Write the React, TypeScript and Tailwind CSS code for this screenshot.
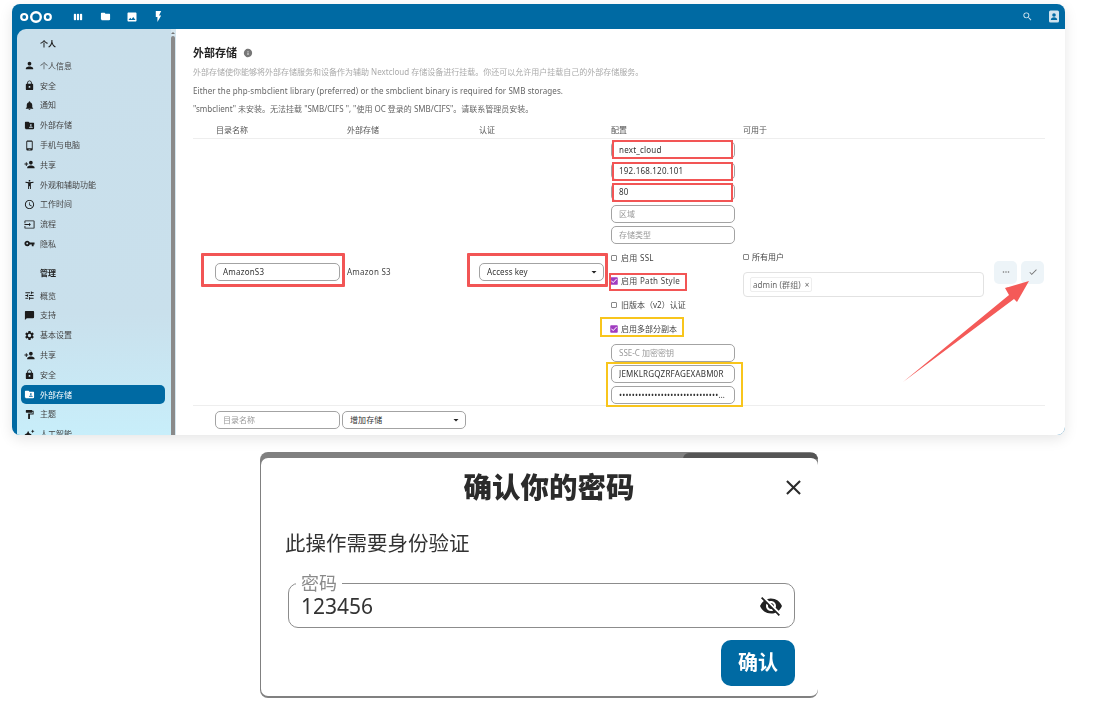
import React from "react";
import {
  MdPerson, MdLock, MdNotifications, MdFolderShared, MdOutlinePhoneAndroid, MdPersonAdd,
  MdAccessibilityNew, MdOutlineAccessTime, MdVpnKey, MdTune, MdChatBubble, MdSettings,
  MdFormatPaint, MdAutoAwesome, MdFolder, MdImage, MdFlashOn, MdSearch, MdViewWeek, MdInfo,
  MdArrowDropDown, MdCheck, MdMoreHoriz, MdClose, MdVisibilityOff, MdInput, MdCheckBox,
} from "react-icons/md";

type Item = { label: string; icon: React.ComponentType<{ className?: string }>; active?: boolean };

const personal: Item[] = [
  { label: "个人信息", icon: MdPerson },
  { label: "安全", icon: MdLock },
  { label: "通知", icon: MdNotifications },
  { label: "外部存储", icon: MdFolderShared },
  { label: "手机与电脑", icon: MdOutlinePhoneAndroid },
  { label: "共享", icon: MdPersonAdd },
  { label: "外观和辅助功能", icon: MdAccessibilityNew },
  { label: "工作时间", icon: MdOutlineAccessTime },
  { label: "流程", icon: MdInput },
  { label: "隐私", icon: MdVpnKey },
];

const admin: Item[] = [
  { label: "概览", icon: MdTune },
  { label: "支持", icon: MdChatBubble },
  { label: "基本设置", icon: MdSettings },
  { label: "共享", icon: MdPersonAdd },
  { label: "安全", icon: MdLock },
  { label: "外部存储", icon: MdFolderShared, active: true },
  { label: "主题", icon: MdFormatPaint },
  { label: "人工智能", icon: MdAutoAwesome },
];

function NavItem({ item }: { item: Item }) {
  const Icon = item.icon;
  return (
    <div className={"mx-[4px] my-[0.6px] flex h-[18.6px] w-[144px] shrink-0 items-center gap-[5px] rounded-[5px] pl-[3px] text-[8px] " + (item.active ? "bg-[#006aa3] text-white" : "text-[#444]")}>
      <Icon className={"h-[11px] w-[11px] shrink-0 " + (item.active ? "text-white" : "text-[#1c1c1c]")} />
      <span>{item.label}</span>
    </div>
  );
}

function Field({ value, placeholder, w = "w-[124px]" }: { value?: string; placeholder?: string; w?: string }) {
  return (
    <div className={"flex h-[18px] shrink-0 items-center overflow-hidden rounded-[5px] border border-[#a3a3a3] bg-white px-[7px] text-[8px] " + w + (value ? " tracking-[0.2px] text-[#333]" : " text-[#999]")}>
      <span className="truncate">{value ?? placeholder}</span>
    </div>
  );
}

function ConfigInput(props: { value?: string; placeholder?: string }) {
  return (
    <div className="flex h-[21.4px] shrink-0 items-center">
      <Field {...props} />
    </div>
  );
}

function Check({ label, checked, latin }: { label: string; checked?: boolean; latin?: boolean }) {
  return (
    <div className={"flex h-[23.6px] shrink-0 items-center gap-[4px] text-[8px] text-[#444] " + (latin ? "tracking-[0.3px]" : "")}>
      {checked ? (
        <MdCheckBox className="ml-[-1px] mr-[-1px] h-[8px] w-[8px] scale-125 text-[#a03cc0]" />
      ) : (
        <span className="h-[6px] w-[6px] rounded-[1px] border border-[#888] bg-white" />
      )}
      <span>{label}</span>
    </div>
  );
}

function Select({ label, w = "w-[125px]" }: { label: string; w?: string }) {
  return (
    <div className={"flex h-[18px] items-center justify-between rounded-[5px] border border-[#a3a3a3] bg-white pl-[7px] pr-[3px] text-[8px] tracking-[0.1px] text-[#333] " + w}>
      <span>{label}</span>
      <MdArrowDropDown className="h-[12px] w-[12px] text-[#222]" />
    </div>
  );
}

function Logo() {
  return (
    <svg viewBox="0 0 32 12" className="h-[12px] w-[32px]" fill="none" stroke="white">
      <circle cx="4.2" cy="6" r="3" strokeWidth="2.2" />
      <circle cx="16" cy="6" r="4.8" strokeWidth="2.4" />
      <circle cx="27.8" cy="6" r="3" strokeWidth="2.2" />
    </svg>
  );
}

function ContactIcon() {
  return (
    <svg viewBox="0 0 12 13" className="h-[13px] w-[12px]">
      <rect x="1" y="0.5" width="10" height="12" rx="1.5" fill="#cfe3ee" />
      <circle cx="6" cy="5" r="1.8" fill="#006aa3" />
      <path d="M2.8 10c0-2 1.4-2.8 3.2-2.8S9.2 8 9.2 10z" fill="#006aa3" />
    </svg>
  );
}

function Box({ className }: { className: string }) {
  return <div className={"pointer-events-none absolute " + className} />;
}

export default function App() {
  return (
    <div className="min-h-[702px] bg-white font-['Noto_Sans','Noto_Sans_CJK_SC',sans-serif]">
      <div className="pl-[12px] pt-[4px]">
        <div className="relative flex h-[431px] w-[1053px] flex-col overflow-hidden rounded-[8px] bg-[#006aa3] shadow-[0_4px_14px_rgba(0,0,0,0.1)] blur-[0.4px]">
          <header className="flex h-[25px] shrink-0 items-center text-white">
            <div className="ml-[8px] flex w-[32px]"><Logo /></div>
            <MdViewWeek className="ml-[21px] h-[10px] w-[10px]" />
            <MdFolder className="ml-[17px] h-[11px] w-[11px]" />
            <MdImage className="ml-[15px] h-[12px] w-[12px]" />
            <MdFlashOn className="ml-[14px] h-[13px] w-[13px]" />
            <MdSearch className="ml-auto h-[11px] w-[11px] text-[#d7e8f1]" />
            <div className="ml-[15px] mr-[5px]"><ContactIcon /></div>
          </header>

          <div className="flex min-h-0 flex-1 pl-[5px]">
            <nav className="flex w-[154px] shrink-0 flex-col overflow-hidden rounded-tl-[9px] bg-gradient-to-b from-[#c9dfeb] via-[#c9e0ec] via-70% to-[#c8eefa] pt-[5px]">
              <div className="ml-[23px] flex h-[20px] shrink-0 items-center text-[8px] font-bold text-[#222]">个人</div>
              <div className="mt-[2px] flex flex-col">
                {personal.map((i) => <NavItem key={i.label} item={i} />)}
              </div>
              <div className="ml-[23px] mt-[9px] flex h-[20px] shrink-0 items-center text-[8px] font-bold text-[#222]">管理</div>
              <div className="mt-[3px] flex flex-col">
                {admin.map((i, n) => <NavItem key={n} item={i} />)}
              </div>
            </nav>

            <div className="flex w-[5px] shrink-0 flex-col items-center bg-[#d5e6ef] pr-px">
              <div className="mt-[3px] h-0 w-0 border-x-[2px] border-b-[2.5px] border-x-transparent border-b-[#777]" />
              <div className="mt-[2px] w-[4px] flex-1 rounded-t-[2px] bg-[#8a8a8a]" />
            </div>

            <main className="flex min-w-0 flex-1 flex-col overflow-hidden bg-white pl-[17px] pt-[16px]">
              <div className="flex h-[16px] shrink-0 items-center gap-[6px] text-[11px] font-bold text-[#222]">
                <span>外部存储</span>
                <MdInfo className="h-[10px] w-[10px] text-[#777]" />
              </div>
              <p className="mt-[2px] flex h-[18px] shrink-0 items-center text-[8px] text-[#aaa]">外部存储使你能够将外部存储服务和设备作为辅助 Nextcloud 存储设备进行挂载。你还可以允许用户挂载自己的外部存储服务。</p>
              <p className="flex h-[19px] shrink-0 items-center text-[8px] tracking-[0.09px] text-[#666]">Either the php-smbclient library (preferred) or the smbclient binary is required for SMB storages.</p>
              <p className="flex h-[18px] shrink-0 items-center text-[8px] text-[#666]">"smbclient" 未安装。无法挂载 "SMB/CIFS ", "使用 OC 登录的 SMB/CIFS"。请联系管理员安装。</p>

              <div className="mt-[3px] w-[852px]">
                <div className="grid h-[18px] grid-cols-[154px_132px_132px_132px_1fr] items-center border-b border-[#eee] text-[8px] text-[#555]">
                  <span className="pl-[23px]">目录名称</span>
                  <span>外部存储</span>
                  <span>认证</span>
                  <span>配置</span>
                  <span>可用于</span>
                </div>

                <div className="flex h-[267px] items-center border-b border-[#eee]">
                  <div className="w-[154px] shrink-0 pl-[22px]"><Field value="AmazonS3" w="w-[125px]" /></div>
                  <div className="w-[132px] shrink-0 text-[8px] tracking-[0.25px] text-[#444]">Amazon S3</div>
                  <div className="w-[132px] shrink-0"><Select label="Access key" /></div>
                  <div className="flex h-full w-[132px] shrink-0 flex-col">
                    <ConfigInput value="next_cloud" />
                    <ConfigInput value="192.168.120.101" />
                    <ConfigInput value="80" />
                    <ConfigInput placeholder="区域" />
                    <ConfigInput placeholder="存储类型" />
                    <Check label="启用 SSL" latin />
                    <Check label="启用 Path Style" checked latin />
                    <Check label="旧版本（v2）认证" />
                    <Check label="启用多部分副本" checked />
                    <div className="mt-[1.5px]" />
                    <ConfigInput placeholder="SSE-C 加密密钥" />
                    <ConfigInput value="JEMKLRGQZRFAGEXABM0R" />
                    <ConfigInput value="••••••••••••••••••••••••••••••••••••••••••••••" />
                  </div>
                  <div className="mt-[2.5px] w-[241px] shrink-0">
                    <div className="flex h-[15px] items-center gap-[3px] text-[8px] text-[#444]">
                      <span className="h-[6px] w-[6px] rounded-[1px] border border-[#888]" />
                      <span>所有用户</span>
                    </div>
                    <div className="mt-[7.5px] flex h-[25px] items-center rounded-[4px] border border-[#e2e2e2] pl-[6px]">
                      <span className="flex h-[15px] items-center gap-[4px] rounded-[2px] border border-[#eee] px-[2px] text-[8px] tracking-[0.1px] text-[#666]">
                        admin (群组) <span className="text-[8px]">×</span>
                      </span>
                    </div>
                  </div>
                  <div className="ml-[10px] flex gap-[4px]">
                    <div className="flex h-[23px] w-[23px] items-center justify-center rounded-[5px] bg-[#edf4f8] text-[#777]"><MdMoreHoriz className="h-[10px] w-[10px]" /></div>
                    <div className="flex h-[23px] w-[23px] items-center justify-center rounded-[5px] bg-[#edf4f8] text-[#777]"><MdCheck className="h-[10px] w-[10px]" /></div>
                  </div>
                </div>

                <div className="flex h-[27px] items-center">
                  <div className="w-[149px] shrink-0 pl-[22px]"><Field placeholder="目录名称" w="w-[125px]" /></div>
                  <Select label="增加存储" w="w-[124px]" />
                </div>
              </div>
            </main>
          </div>

          <Box className="left-[189px] top-[249px] h-[34px] w-[144px] rounded-[1px] border-[3px] border-[#f25555]" />
          <Box className="left-[455px] top-[249px] h-[34px] w-[141px] rounded-[1px] border-[3px] border-[#f25555]" />
          <Box className="left-[600px] top-[136px] h-[19px] w-[121px] border-2 border-[#f25555]" />
          <Box className="left-[600px] top-[158px] h-[19px] w-[121px] border-2 border-[#f25555]" />
          <Box className="left-[600px] top-[179px] h-[19px] w-[121px] border-2 border-[#f25555]" />
          <Box className="left-[597px] top-[269px] h-[18px] w-[78px] border-2 border-[#f25555]" />
          <Box className="left-[588px] top-[313px] h-[20px] w-[84px] border-2 border-[#f8c51c]" />
          <Box className="left-[594px] top-[358px] h-[45px] w-[137px] border-2 border-[#f8c51c]" />
          <svg viewBox="0 0 140 110" className="pointer-events-none absolute left-[890px] top-[276px] h-[110px] w-[140px]">
            <polygon points="1,102 107,15 103,8 127,1 115,22 112,19" fill="#f45a58" />
          </svg>
        </div>
      </div>

      <div className="relative ml-[260px] mt-[17px] h-[246px] w-[558px] overflow-hidden rounded-[8px] bg-[#808080] pb-[2px] pl-px pt-[6px] blur-[0.3px]">
        <div className="absolute right-0 top-px h-[6px] w-[135px] rounded-tl-[6px] bg-[#555]" />
        <div className="relative flex h-full flex-col rounded-[7px] bg-white">
          <div className="ml-[19px] mt-[13px] flex h-[32px] items-center justify-center text-[28.5px] font-black leading-none text-[#2b2b2b]">确认你的密码</div>
          <MdClose className="absolute right-[12px] top-[17px] h-[25px] w-[25px] text-[#2b2b2b]" />
          <p className="ml-[24px] mt-[26px] text-[20.5px] leading-[28px] text-[#333]">此操作需要身份验证</p>
          <fieldset className="ml-[27px] mt-[17px] flex h-[54px] w-[507px] items-center justify-between rounded-[10px] border border-[#8c8c8c] pl-[12px] pr-[11px]">
            <legend className="ml-[-5px] px-[5px] text-[18px] leading-[18px] text-[#8a8a8a]">密码</legend>
            <span className="text-[21px] leading-[28px] text-[#333]">123456</span>
            <MdVisibilityOff className="h-[24px] w-[24px] text-[#222]" />
          </fieldset>
          <div className="ml-[460px] mt-[12px] flex h-[46px] w-[74px] items-center justify-center rounded-[10px] bg-[#006aa3] text-[20px] font-bold text-white">确认</div>
        </div>
      </div>
    </div>
  );
}
